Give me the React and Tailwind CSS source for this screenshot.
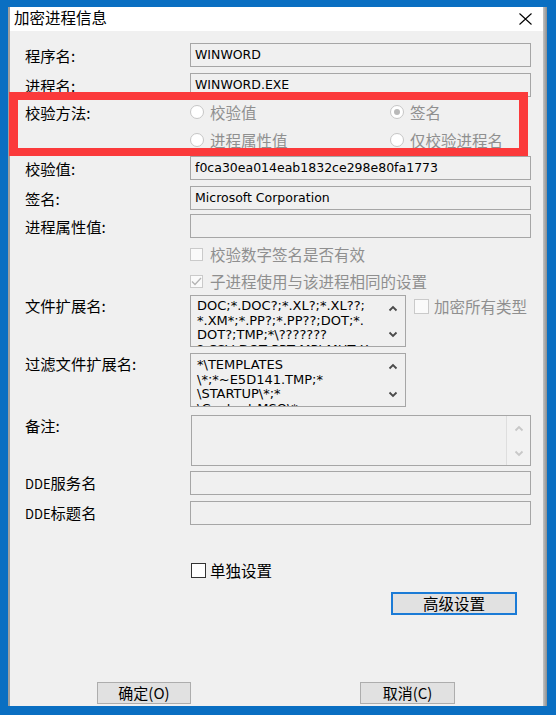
import React from "react";

const Up = ({ c = "#4a4a4a" }) => (
  <svg width="10" height="7" viewBox="0 0 10 7"><path d="M1.5 5.5 L5 2 L8.5 5.5" fill="none" stroke={c} strokeWidth="1.8" /></svg>
);
const Down = ({ c = "#4a4a4a" }) => (
  <svg width="10" height="7" viewBox="0 0 10 7"><path d="M1.5 1.5 L5 5 L8.5 1.5" fill="none" stroke={c} strokeWidth="1.8" /></svg>
);

function Label({ children }) {
  return <div className="w-[165px] shrink-0 text-[15.3px] leading-[20px] text-black whitespace-nowrap">{children}</div>;
}

function Field({ children }) {
  return (
    <div className="h-[24px] w-[341px] border border-[#a6a6a6] bg-[#f0f0f0] flex items-center pl-[4px] text-[12.5px] text-black font-['DejaVu_Sans',sans-serif] whitespace-nowrap overflow-hidden">
      {children}
    </div>
  );
}

function Radio({ checked, children }) {
  return (
    <div className="flex items-center">
      <div className="w-[14px] h-[14px] rounded-full border border-[#c6c6c6] bg-white flex items-center justify-center">
        {checked && <div className="w-[6px] h-[6px] rounded-full bg-[#b9b9b9]" />}
      </div>
      <span className="ml-[6px] text-[15.5px] leading-[20px] text-[#8f8f8f]">{children}</span>
    </div>
  );
}

function Memo({ w, h, lines, pt, disabled }) {
  return (
    <div className={`relative flex border border-[#a6a6a6] bg-[#f0f0f0] overflow-hidden ${w} ${h}`}>
      <div className={`flex-1 pl-[6px] ${pt} text-[13px] leading-[14.5px] text-black font-['DejaVu_Sans',sans-serif] whitespace-nowrap overflow-hidden`}>
        {lines.map((l, i) => (
          <div key={i}>{l}</div>
        ))}
      </div>
      {disabled ? (
        <div className="w-[24px] border-l border-[#dedede] bg-[#f2f2f2] flex flex-col items-center justify-between pt-[9px] pb-[8px]">
          <Up c="#c8c8c8" />
          <Down c="#c8c8c8" />
        </div>
      ) : (
        <div className="w-[24px] flex flex-col items-center justify-between pt-[9px] pb-[8px]">
          <Up />
          <Down />
        </div>
      )}
    </div>
  );
}

function Btn({ children, className }) {
  return (
    <div className={`h-[22px] border border-[#adadad] bg-[#e1e1e1] flex items-center justify-center text-[15px] text-black ${className}`}>
      {children}
    </div>
  );
}

export default function App() {
  return (
    <div className="relative w-[556px] h-[715px] bg-[#0a6fc2] pt-[7px] pl-[8px] flex overflow-hidden font-['Noto_Sans_CJK_SC','Noto_Sans',sans-serif]">
      <div className="w-[535px] h-[699px] flex flex-col border-l-2 border-[#9f9f9f] bg-[#f0f0f0] overflow-hidden">
        {/* title bar */}
        <div className="h-[24px] shrink-0 bg-white flex items-start justify-between pl-[4px] pr-[11px]">
          <span className="text-[15.5px] leading-[20px] text-black">加密进程信息</span>
          <svg width="13" height="12" viewBox="0 0 13 12" className="mt-[6px]">
            <path d="M0.5 0.5 L12.5 11.5 M12.5 0.5 L0.5 11.5" stroke="#000" strokeWidth="1.1" fill="none" />
          </svg>
        </div>

        {/* body */}
        <div className="flex-1 flex flex-col pl-[15px]">
          <div className="mt-[12px] flex items-center">
            <Label>程序名:</Label>
            <Field>WINWORD</Field>
          </div>
          <div className="mt-[6px] flex items-center">
            <Label>进程名:</Label>
            <Field>WINWORD.EXE</Field>
          </div>

          <div className="mt-[5px] h-[20px] flex items-center">
            <Label>校验方法:</Label>
            <div className="w-[200px]">
              <Radio>校验值</Radio>
            </div>
            <Radio checked>签名</Radio>
          </div>
          <div className="mt-[8px] h-[20px] flex items-center">
            <Label></Label>
            <div className="w-[200px]">
              <Radio>进程属性值</Radio>
            </div>
            <Radio>仅校验进程名</Radio>
          </div>

          <div className="mt-[6px] flex items-center">
            <Label>校验值:</Label>
            <Field>f0ca30ea014eab1832ce298e80fa1773</Field>
          </div>
          <div className="mt-[6px] flex items-center">
            <Label>签名:</Label>
            <Field>Microsoft Corporation</Field>
          </div>
          <div className="mt-[4px] flex items-center">
            <Label>进程属性值:</Label>
            <Field></Field>
          </div>

          <div className="mt-[6px] h-[20px] flex items-center">
            <Label></Label>
            <div className="w-[13px] h-[13px] border border-[#cacaca] bg-[#fafafa]" />
            <span className="ml-[7px] text-[15.5px] leading-[20px] text-[#8f8f8f]">校验数字签名是否有效</span>
          </div>
          <div className="mt-[7px] h-[20px] flex items-center">
            <Label></Label>
            <div className="w-[13px] h-[13px] border border-[#cacaca] bg-[#fafafa] flex items-center justify-center">
              <svg width="11" height="9" viewBox="0 0 11 9"><path d="M1 4.5 L4 7.5 L10 1" fill="none" stroke="#b4b4b4" strokeWidth="1.3" /></svg>
            </div>
            <span className="ml-[7px] text-[15.5px] leading-[20px] text-[#8f8f8f]">子进程使用与该进程相同的设置</span>
          </div>

          <div className="mt-[4px] flex items-start">
            <Label>文件扩展名:</Label>
            <Memo
              w="w-[216px]"
              h="h-[52px]"
              pt="pt-[3px]"
              lines={[
                "DOC;*.DOC?;*.XL?;*.XL??;",
                "*.XM*;*.PP?;*.PP??;DOT;*.",
                "DOT?;TMP;*\\???????",
                "?.CSV;DOT;PPT;MPI;MHT;X",
              ]}
            />
            <div className="ml-[8px] mt-[1px] flex items-center">
              <div className="w-[15px] h-[15px] border border-[#cacaca] bg-[#fafafa]" />
              <span className="ml-[5px] text-[15.5px] leading-[20px] text-[#8f8f8f]">加密所有类型</span>
            </div>
          </div>

          <div className="mt-[6px] flex items-start">
            <Label>过滤文件扩展名:</Label>
            <Memo
              w="w-[216px]"
              h="h-[54px]"
              pt="pt-[4px]"
              lines={["*\\TEMPLATES", "\\*;*~E5D141.TMP;*", "\\STARTUP\\*;*", "\\Content.MSO\\*"]}
            />
          </div>

          <div className="mt-[8px] flex items-start">
            <Label>备注:</Label>
            <Memo w="w-[340px] ml-[1px]" h="h-[51px]" pt="pt-[2px]" lines={[]} disabled />
          </div>

          <div className="mt-[5px] flex items-center">
            <Label>
              <span className="text-[13px]">DDE</span>服务名
            </Label>
            <Field></Field>
          </div>
          <div className="mt-[6px] flex items-center">
            <Label>
              <span className="text-[13px]">DDE</span>标题名
            </Label>
            <Field></Field>
          </div>

          <div className="mt-[35px] h-[20px] flex items-center">
            <Label></Label>
            <div className="ml-[1px] w-[15px] h-[15px] border border-[#333333] bg-white" />
            <span className="ml-[4px] text-[15.5px] leading-[20px] text-black">单独设置</span>
          </div>

          <div className="mt-[12px] flex">
            <div className="ml-[366px] w-[126px] h-[23px] border-2 border-[#1b7bd6] bg-[#e1e1e1] flex items-center justify-center text-[15.5px] text-black">
              高级设置
            </div>
          </div>

          <div className="mt-[67px] flex">
            <Btn className="ml-[72px] w-[94px]">确定(O)</Btn>
            <Btn className="ml-[169px] w-[95px]">取消(C)</Btn>
          </div>
        </div>
      </div>
      <div className="w-[4px] h-[699px] bg-gradient-to-r from-[#c4c4c4] to-[#8e8e8e]" />

      {/* red annotation box */}
      <div className="absolute left-[9px] top-[92px] w-[519px] h-[64px] border-y-[8px] border-x-[9px] border-[#fb3a3b]" />
    </div>
  );
}
